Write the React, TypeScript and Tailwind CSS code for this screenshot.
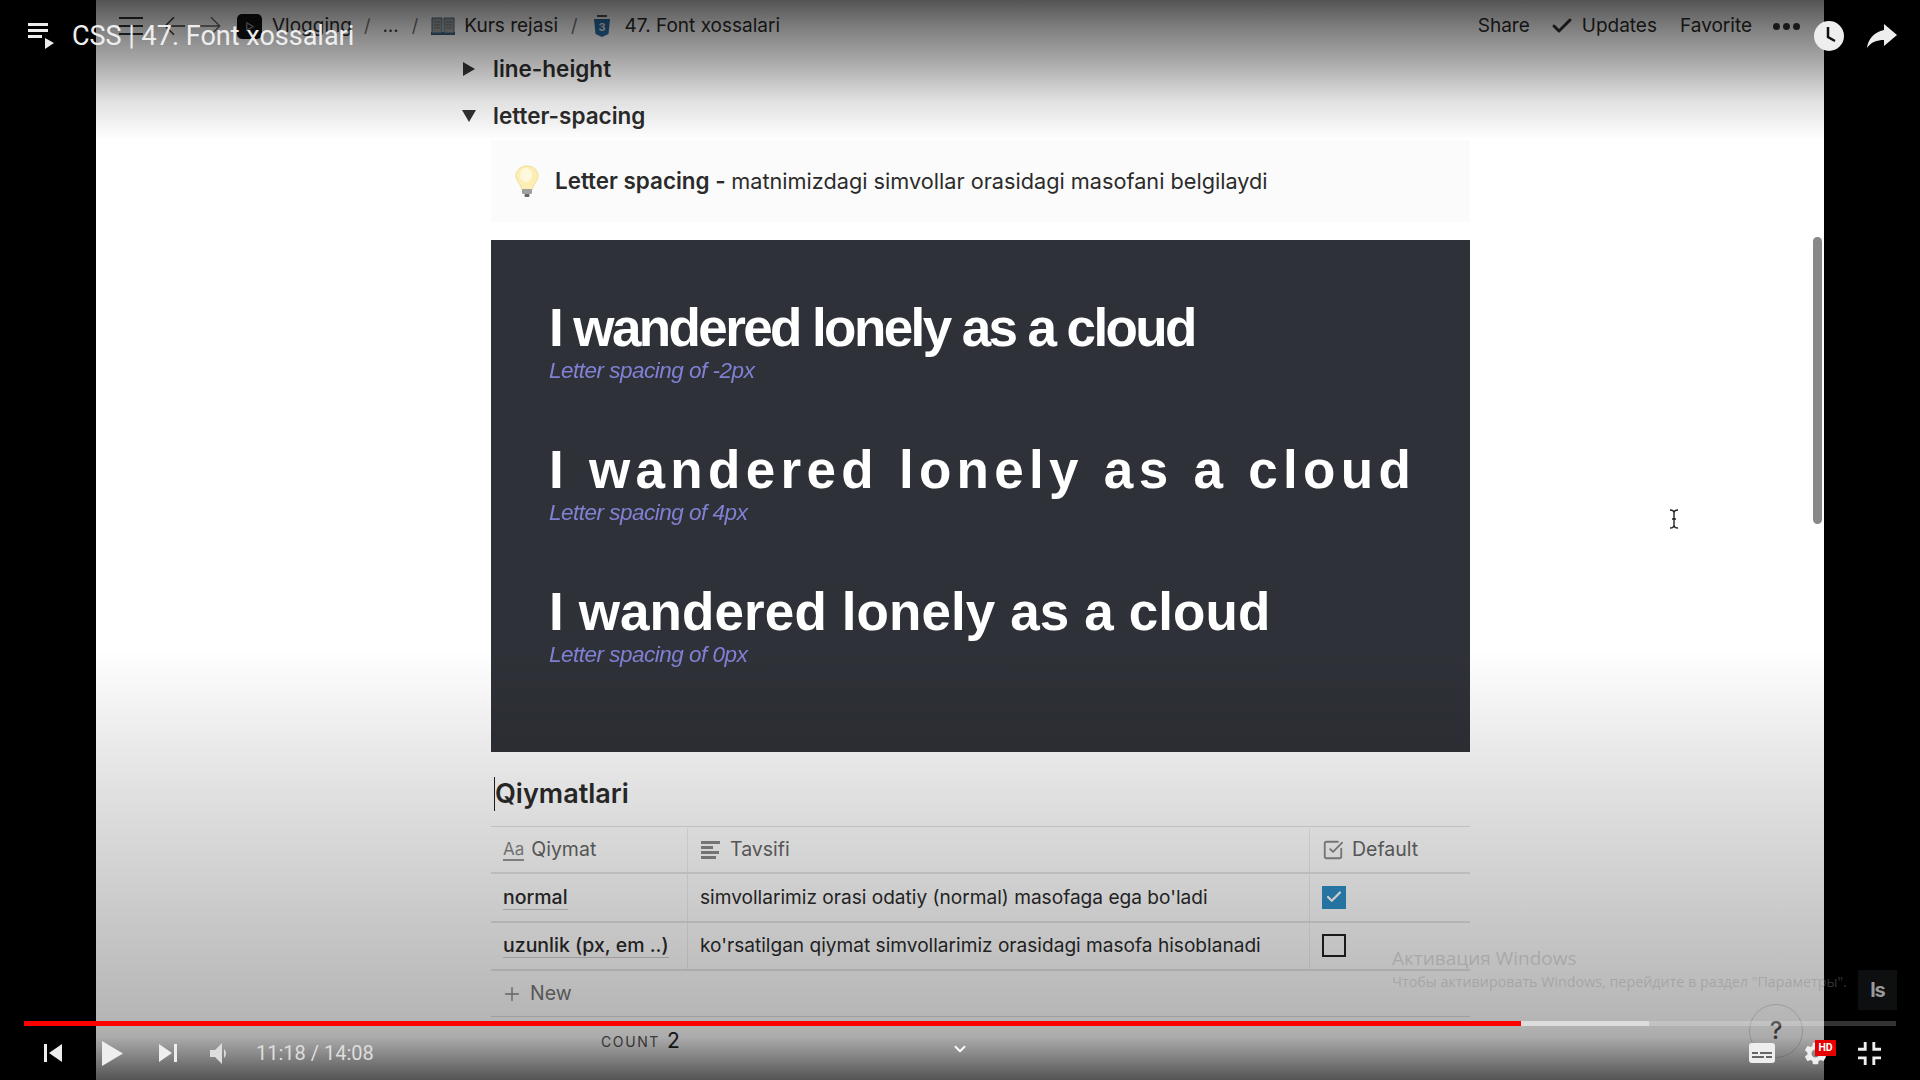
import { Check, Plus, ChevronDown, CheckSquare } from "lucide-react";
import { MdSettings } from "react-icons/md";

const SAMPLES = [
  { spacing: "tracking-[-2.6px]", caption: "Letter spacing of -2px" },
  { spacing: "tracking-[5.3px]", caption: "Letter spacing of 4px" },
  { spacing: "tracking-[0.1px]", caption: "Letter spacing of 0px" },
];

const ROWS = [
  { name: "normal", text: "simvollarimiz orasi odatiy (normal) masofaga ega bo'ladi", on: true },
  { name: "uzunlik (px, em ..)", text: "ko'rsatilgan qiymat simvollarimiz orasidagi masofa hisoblanadi", on: false },
];

function Slash() {
  return <span className="text-[18px] text-[#777]">/</span>;
}

function Breadcrumbs() {
  return (
    <div className="flex h-[46px] shrink-0 items-center pt-[6px] font-['Inter',sans-serif] text-[19px] text-[#2b2b2b]">
      {/* Menu, back, forward */}
      <svg viewBox="0 0 24 18" className="ml-[23px] h-[18px] w-[24px]" fill="#333">
        <rect y="0" width="24" height="2" />
        <rect y="8" width="24" height="2" />
        <rect y="16" width="24" height="2" />
      </svg>
      <svg viewBox="0 0 20 20" className="ml-[20px] h-[22px] w-[22px]" fill="none" stroke="#3a3a3a" strokeWidth="1.4">
        <path d="M10 2 2 10l8 8M2 10h18" />
      </svg>
      <svg viewBox="0 0 20 20" className="ml-[15px] h-[22px] w-[22px]" fill="none" stroke="#666" strokeWidth="1.2">
        <path d="M10 2l8 8-8 8M18 10H0" />
      </svg>
      {/* Workspace logo */}
      <div className="ml-[15px] flex h-[25px] w-[25px] items-center justify-center rounded-[5px] bg-[#111]">
        <svg viewBox="0 0 12 12" className="h-[11px] w-[11px]" fill="none" stroke="#888" strokeWidth="1.5">
          <path d="M3 2l7 4-7 4z" />
        </svg>
      </div>
      <span className="ml-[10px]">Vlogging</span>
      <span className="ml-[12px]"><Slash /></span>
      <span className="ml-[12px] text-[#444]">...</span>
      <span className="ml-[13px]"><Slash /></span>
      {/* Book */}
      <svg viewBox="0 0 24 18" className="ml-[13px] h-[18px] w-[24px]">
        <rect x="0" y="15" width="24" height="3" fill="#36607f" />
        <path d="M1 1h10v15H1zM13 1h10v15H13z" fill="#a8a8a8" stroke="#4a6f8a" strokeWidth="1" />
        <path d="M3 5h6M3 8h6M3 11h6M15 5h6M15 8h6M15 11h6" stroke="#777" strokeWidth="1" />
      </svg>
      <span className="ml-[9px]">Kurs rejasi</span>
      <span className="ml-[13px]"><Slash /></span>
      {/* CSS3 shield */}
      <svg viewBox="0 0 16 22" className="ml-[16px] h-[22px] w-[16px]">
        <rect x="3" y="0" width="10" height="2" fill="#555" />
        <path d="M0 4h16l-1.5 15L8 22l-6.500-3z" fill="#2a6da8" />
        <text x="8" y="16" textAnchor="middle" fontSize="11" fontWeight="700" fill="#e8e8e8" fontFamily="Inter, sans-serif">3</text>
      </svg>
      <span className="ml-[15px]">47. Font xossalari</span>
      <div className="ml-auto flex items-center pr-[24px]">
        <span>Share</span>
        <Check className="ml-[20px] h-[24px] w-[24px] text-[#333]" strokeWidth={3} />
        <span className="ml-[8px]">Updates</span>
        <span className="ml-[23px]">Favorite</span>
        <div className="ml-[21px] flex gap-[3px]">
          <span className="h-[7px] w-[7px] rounded-full bg-[#333]" />
          <span className="h-[7px] w-[7px] rounded-full bg-[#333]" />
          <span className="h-[7px] w-[7px] rounded-full bg-[#333]" />
        </div>
      </div>
    </div>
  );
}

function ToggleRow({ open, label }: { open: boolean; label: string }) {
  return (
    <div className="flex h-[46px] items-center font-['Inter',sans-serif] text-[22.5px] font-semibold text-[#2c2c2c]">
      <svg viewBox="0 0 14 14" className="ml-[-29px] mr-[17px] h-[14px] w-[14px]" fill="#333">
        {open ? <path d="M0 1h14L7 13z" /> : <path d="M1 0l12 7-12 7z" />}
      </svg>
      {label}
    </div>
  );
}

function Bulb() {
  return (
    <svg viewBox="0 0 24 32" className="h-[32px] w-[24px]">
      <path d="M12 1C5 1 1 6 1 11c0 5 5 8 6 14h10c1-6 6-9 6-14 0-5-4-10-11-10z" fill="#fdeeb4" stroke="#f2dc94" strokeWidth="1" />
      <ellipse cx="11" cy="10" rx="6" ry="7" fill="#fff8df" />
      <rect x="7" y="24" width="10" height="5" rx="1" fill="#9f9f9f" />
      <rect x="9.500" y="29" width="5" height="3" rx="1" fill="#666" />
    </svg>
  );
}

function Table() {
  return (
    <div className="mt-[12px] border-t border-[#0000001f] font-['Inter',sans-serif] text-[19.5px] text-[#2b2b2b]">
      <div className="grid h-[47px] grid-cols-[197px_622px_1fr] border-b-2 border-[#0000001a] pt-[1px] text-[#666]">
        <div className="flex items-center border-r border-[#00000012] pl-[12px]">
          <span className="border-b-2 border-[#999] text-[17px] leading-[19px] text-[#888]">Aa</span>
          <span className="ml-[7px]">Qiymat</span>
        </div>
        <div className="flex items-center border-r border-[#00000012] pl-[13px]">
          <svg viewBox="0 0 20 18" className="h-[18px] w-[20px]" fill="#8a8a8a">
            <rect y="0" width="19" height="3" />
            <rect y="5" width="12" height="3" />
            <rect y="10" width="18" height="3" />
            <rect y="15" width="15" height="3" />
          </svg>
          <span className="ml-[9px]">Tavsifi</span>
        </div>
        <div className="flex items-center pl-[12px]">
          <CheckSquare className="h-[22px] w-[22px] text-[#8a8a8a]" strokeWidth={2} />
          <span className="ml-[8px]">Default</span>
        </div>
      </div>
      {ROWS.map((row) => (
        <div key={row.name} className="grid h-[48.5px] grid-cols-[197px_622px_1fr] border-b-2 border-[#0000001a]">
          <div className="flex items-center border-r border-[#00000012] pl-[12px] font-medium">
            <span className="border-b border-[#00000030] leading-[24px]">{row.name}</span>
          </div>
          <div className="flex items-center border-r border-[#00000012] pl-[12px] text-[19.1px]">{row.text}</div>
          <div className="flex items-center pl-[12px]">
            {row.on ? (
              <span className="flex h-[23px] w-[24px] items-center justify-center bg-[#2e90c9]">
                <Check className="h-[18px] w-[18px] text-white" strokeWidth={3} />
              </span>
            ) : (
              <span className="h-[23px] w-[24px] border-2 border-[#222]" />
            )}
          </div>
        </div>
      ))}
      <div className="flex h-[46px] items-center border-b border-[#0000001f] pl-[10px] text-[#777]">
        <Plus className="h-[22px] w-[22px] text-[#888]" strokeWidth={1.5} />
        <span className="ml-[7px]">New</span>
      </div>
      <div className="flex h-[48px] items-center pl-[110px]">
        <span className="text-[14px] tracking-[1.6px] text-[#555]">COUNT</span>
        <span className="ml-[7px] text-[21px] text-[#222]">2</span>
      </div>
    </div>
  );
}

function PlayerTop() {
  return (
    <div className="absolute inset-x-0 top-0 flex h-[72px] items-center font-['Roboto',sans-serif] text-[27px] text-[#eeeeee]">
      <svg viewBox="0 0 26 26" className="ml-[28px] h-[26px] w-[26px]" fill="#eee">
        <rect x="0" y="0" width="20" height="3" />
        <rect x="0" y="6" width="20" height="3" />
        <rect x="0" y="12" width="14" height="3" />
        <path d="M17 15l9 5-9 6z" />
      </svg>
      <span className="ml-[18px]">CSS | 47. Font xossalari</span>
      <div className="ml-auto flex items-center gap-[23px] pr-[23px]">
        {/* Watch later */}
        <svg viewBox="0 0 30 30" className="h-[30px] w-[30px]">
          <circle cx="15" cy="15" r="15" fill="#eeeeee" />
          <path d="M14 6v10l7 4" fill="none" stroke="#111" strokeWidth="2.500" />
        </svg>
        {/* Share */}
        <svg viewBox="0 0 30 24" className="h-[24px] w-[30px]" fill="#eeeeee">
          <path d="M17 0l13 11-13 11v-6C10 16 4 18 0 24 1 15 7 8 17 6z" />
        </svg>
      </div>
    </div>
  );
}

function PlayerBottom() {
  return (
    <div className="absolute inset-x-0 bottom-0 h-[59px] font-['Roboto',sans-serif]">
      {/* Progress */}
      <div className="mx-[24px] flex h-[5px] bg-[#ffffff33]">
        <div className="h-full w-[1497px] bg-[#ff0000]" />
        <div className="h-full w-[128px] bg-[#dddddd]" />
      </div>
      <div className="flex h-[54px] items-center">
        <svg viewBox="0 0 18 18" className="ml-[44px] h-[18px] w-[18px]" fill="#eee">
          <rect width="3" height="18" />
          <path d="M18 0v18L5 9z" />
        </svg>
        <svg viewBox="0 0 21 25" className="ml-[40px] h-[25px] w-[21px]" fill="#eee">
          <path d="M0 0l21 12.500L0 25z" />
        </svg>
        <svg viewBox="0 0 18 18" className="ml-[36px] h-[18px] w-[18px]" fill="#eee">
          <path d="M0 0v18l13-9z" />
          <rect x="15" width="3" height="18" />
        </svg>
        <svg viewBox="0 0 18 21" className="ml-[33px] h-[21px] w-[18px]" fill="#ddd">
          <path d="M0 7h5l7-7v21l-7-7H0z" />
          <path d="M14 6c2.500 2 2.500 7 0 9z" />
        </svg>
        <span className="ml-[28px] text-[20px] text-[#dddddd]">11:18 / 14:08</span>
        <div className="ml-auto flex items-center pr-[39px]">
          {/* Subtitles */}
          <svg viewBox="0 0 26 20" className="h-[20px] w-[26px]">
            <rect width="26" height="20" rx="3" fill="#eee" />
            <path d="M3 9h6v2H3zM11 9h12v2H11zM3 13h12v2H3zM17 13h6v2h-6z" fill="#666" />
          </svg>
          <div className="relative ml-[29px] h-[24px] w-[24px]">
            <MdSettings className="h-[27px] w-[27px] -translate-x-[2px] -translate-y-[1px] text-[#eee]" />
            <span className="absolute left-[11px] top-[-1px] flex h-[16px] w-[21px] items-center justify-center bg-[#e60000] text-[10.500px] font-bold leading-none text-white">HD</span>
          </div>
          <svg viewBox="10 10 16 16" className="ml-[30px] h-[23px] w-[23px]" fill="#eee">
            <path d="m14 14-4 0 0 2 6 0 0-6-2 0 0 4z" />
            <path d="m22 14 0-4-2 0 0 6 6 0 0-2-4 0z" />
            <path d="m20 26 2 0 0-4 4 0 0-2-6 0 0 6z" />
            <path d="m10 22 4 0 0 4 2 0 0-6-6 0 0 2z" />
          </svg>
        </div>
      </div>
    </div>
  );
}

export default function App() {
  return (
    <div className="relative h-[1080px] w-[1920px] overflow-hidden bg-black">
      {/* Recorded page */}
      <div className="ml-[96px] flex h-full w-[1728px] flex-col bg-white">
        <Breadcrumbs />
        <div className="ml-[395px] w-[979px]">
          <ToggleRow open={false} label="line-height" />
          <div className="mt-[1px] mb-[1px]">
            <ToggleRow open label="letter-spacing" />
          </div>
          <div className="flex h-[82px] items-center bg-[#fbfbfb] pl-[24px] font-['Inter',sans-serif] text-[21.7px] text-[#2b2b2b]">
            <Bulb />
            <p className="ml-[16px]">
              <span className="text-[22.4px] font-semibold">Letter spacing - </span>matnimizdagi simvollar orasidagi masofani belgilaydi
            </p>
          </div>
          <div className="mt-[18px] h-[512px] bg-[#2f3138] pl-[58px] pt-[60px] font-['Liberation_Sans',sans-serif]">
            {SAMPLES.map((s) => (
              <div key={s.caption} className="mb-[59px] blur-[0.4px]">
                <div className={`whitespace-nowrap text-[53px] font-bold leading-[56px] text-white ${s.spacing}`}>
                  I wandered lonely as a cloud
                </div>
                <div className="mt-[2px] h-[25px] text-[22.5px] italic leading-[26px] tracking-[-0.5px] text-[#8080d4]">{s.caption}</div>
              </div>
            ))}
          </div>
          <h2 className="mt-[22px] flex h-[40px] items-center font-['Inter',sans-serif] text-[27px] font-semibold text-[#2b2b2b]">
            <span className="ml-[3px] h-[34px] w-[1px] bg-[#222]" />
            Qiymatlari
          </h2>
          <Table />
        </div>
      </div>

      {/* Scrollbar and text cursor from the recording */}
      <div className="absolute left-[1813px] top-[237px] h-[287px] w-[9px] rounded-full bg-[#888888]" />
      <svg viewBox="0 0 10 20" className="absolute left-[1669px] top-[509px] h-[20px] w-[10px]" fill="none" stroke="#222" strokeWidth="1.400">
        <path d="M1 1c2 0 4 1 4 3v12c0 2-2 3-4 3M9 1C7 1 5 2 5 4M9 19c-2 0-4-1-4-3M3 10h4" />
      </svg>

      {/* Player scrims */}
      <div className="absolute inset-x-0 top-0 h-[140px] bg-[linear-gradient(to_bottom,rgba(0,0,0,0.67)_0%,rgba(0,0,0,0.5)_20%,rgba(0,0,0,0.33)_45%,rgba(0,0,0,0.12)_72%,rgba(0,0,0,0)_100%)]" />
      <div className="absolute inset-x-0 bottom-0 h-[430px] bg-[linear-gradient(to_bottom,rgba(0,0,0,0)_0%,rgba(0,0,0,0.09)_24%,rgba(0,0,0,0.29)_86%,rgba(0,0,0,0.33)_90%,rgba(0,0,0,0.67)_100%)]" />

      {/* Windows activation watermark */}
      <div className="absolute left-[1392px] top-[945px] font-['Open_Sans',sans-serif] text-[#80808066]">
        <div className="text-[19px] leading-[26px]">Активация Windows</div>
        <div className="mt-[1px] whitespace-nowrap text-[14.3px] leading-[20px]">Чтобы активировать Windows, перейдите в раздел "Параметры".</div>
      </div>
      <div className="absolute left-[1858px] top-[970px] flex h-[40px] w-[39px] items-center justify-center bg-[#0d0f10] font-['Inter',sans-serif] text-[20px] font-bold tracking-[-1px] text-[#999]">
        ls
      </div>

      {/* Help bubble */}
      <div className="absolute left-[1749px] top-[1004px] flex h-[54px] w-[54px] items-center justify-center rounded-full border border-[#00000026] font-['Inter',sans-serif] text-[24px] font-medium text-[#333]">
        ?
      </div>
      <ChevronDown className="absolute left-[951px] top-[1040px] h-[18px] w-[18px] text-white" strokeWidth={2.5} />

      <PlayerTop />
      <PlayerBottom />
    </div>
  );
}
